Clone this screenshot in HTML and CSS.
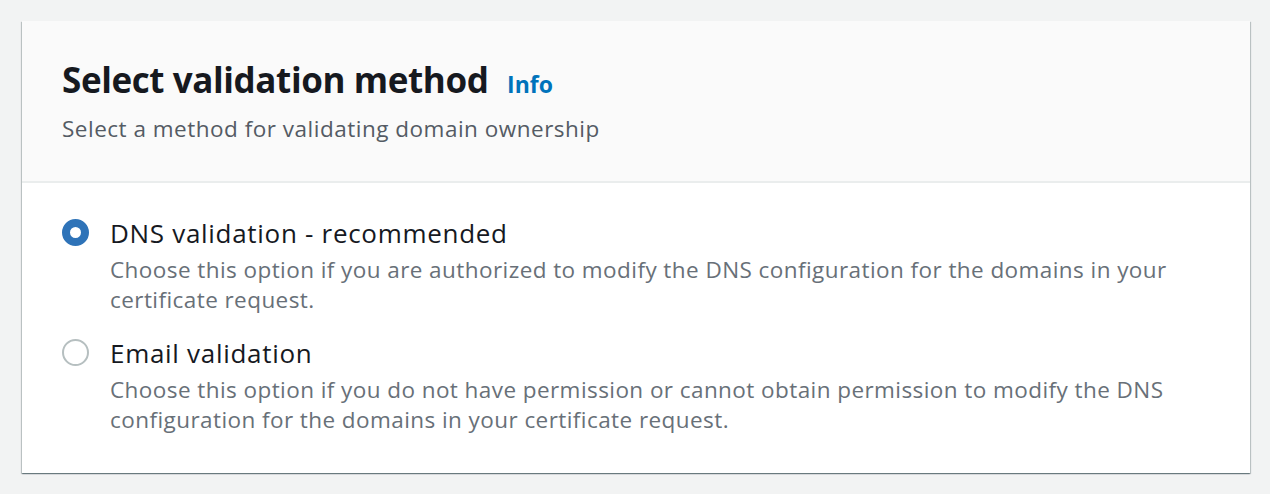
FILE: index.html
```html
<!DOCTYPE html>
<html>
<head>
<meta charset="utf-8">
<link rel="stylesheet" href="styles.css">
</head>
<body>
<div class="page">
  <section class="card">
    <header class="card-header">
      <h2 class="title">Select validation method <a class="info" href="#">Info</a></h2>
      <p class="subtitle">Select a method for validating domain ownership</p>
    </header>
    <div class="card-body">
      <div class="option">
        <span class="radio checked"></span>
        <div class="option-text">
          <div class="label">DNS validation - recommended</div>
          <div class="desc">Choose this option if you are authorized to modify the DNS configuration for the domains in your certificate request.</div>
        </div>
      </div>
      <div class="option">
        <span class="radio"></span>
        <div class="option-text">
          <div class="label">Email validation</div>
          <div class="desc">Choose this option if you do not have permission or cannot obtain permission to modify the DNS configuration for the domains in your certificate request.</div>
        </div>
      </div>
    </div>
  </section>
</div>
</body>
</html>
```
FILE: styles.css
```css
html, body { margin: 0; padding: 0; }
body {
  background: #f2f3f3;
  font-family: "Open Sans", "Liberation Sans", sans-serif;
  width: 1270px;
  height: 494px;
  overflow: hidden;
}
.page { padding: 21px 0 0 22px; }
.card {
  background: #fff;
  box-shadow: 0 1px 1px 0 rgba(0,28,36,0.35), 1px 1px 1px 0 rgba(0,28,36,0.18), -1px 1px 1px 0 rgba(0,28,36,0.18);
  width: 1228px;
}
.card-header {
  background: #fafafa;
  border-bottom: 2px solid #eaeded;
  padding: 39px 40px 37px 40px;
}
.title {
  margin: 0;
  font-size: 35px;
  line-height: 40px;
  font-weight: 700;
  color: #16191f;
  letter-spacing: -0.4px;
}
.info {
  font-size: 23px;
  font-weight: 700;
  color: #0073bb;
  text-decoration: none;
  margin-left: 10px;
  letter-spacing: 0;
}
.subtitle {
  margin: 10px 0 0;
  font-size: 22.5px;
  line-height: 30px;
  color: #545b64;
  letter-spacing: 0.5px;
}
.card-body { padding: 34px 40px 38px 40px; }
.option { display: flex; gap: 21px; }
.option + .option { margin-top: 22px; }
.radio {
  flex: none;
  width: 27px;
  height: 27px;
  border-radius: 50%;
  border: 2px solid #b6bfc0;
  box-sizing: border-box;
  margin-top: 2px;
  background: #fff;
}
.radio.checked {
  border: 8.5px solid #2e73b8;
}
.label {
  font-size: 26px;
  line-height: 32px;
  color: #16191f;
  letter-spacing: 0.7px;
}
.desc {
  margin-top: 6px;
  font-size: 22.5px;
  line-height: 30px;
  color: #687078;
  letter-spacing: 0.43px;
}
```
